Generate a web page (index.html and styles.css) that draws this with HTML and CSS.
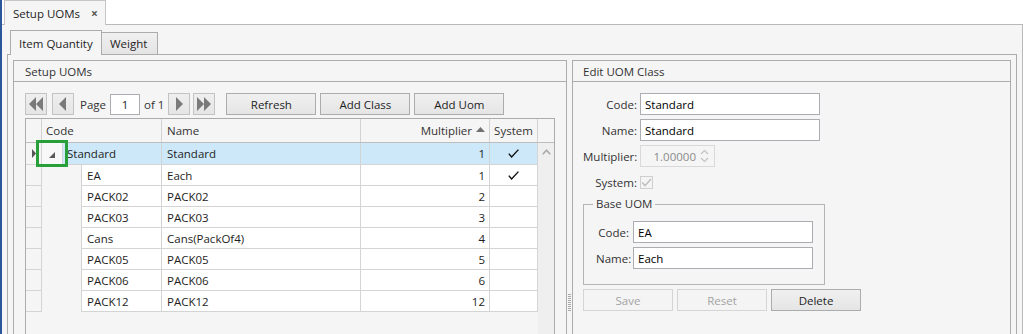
FILE: index.html
```html
<!DOCTYPE html>
<html>
<head>
<meta charset="utf-8">
<link rel="stylesheet" href="styles.css">
</head>
<body>
<div class="window">
  <div class="doc-tabs">
    <div class="doc-tab"><span>Setup UOMs</span><span class="close">×</span></div>
  </div>
  <div class="doc-body">
    <div class="tabs">
      <div class="tab active">Item Quantity</div>
      <div class="tab">Weight</div>
    </div>
    <div class="tab-panel">
      <section class="group left">
        <div class="group-head pl11">Setup UOMs</div>
        <div class="left-body">
          <div class="pager">
            <button class="pbtn"><svg width="16" height="14" viewBox="0 0 16 14"><path d="M8 0v14L1 7z M15 0v14L8 7z" fill="#7a7a7a"/></svg></button>
            <button class="pbtn m5"><svg width="10" height="14" viewBox="0 0 10 14"><path d="M8 0v14L1 7z" fill="#7a7a7a"/></svg></button>
            <span class="ptext m6">Page</span>
            <span class="pinput">1</span>
            <span class="ptext m4">of 1</span>
            <button class="pbtn m4"><svg width="10" height="14" viewBox="0 0 10 14"><path d="M2 0v14L9 7z" fill="#7a7a7a"/></svg></button>
            <button class="pbtn m3"><svg width="16" height="14" viewBox="0 0 16 14"><path d="M1 0v14L8 7z M8 0v14L15 7z" fill="#7a7a7a"/></svg></button>
            <button class="btn m11">Refresh</button>
            <button class="btn m4">Add Class</button>
            <button class="btn m4">Add Uom</button>
          </div>
          <div class="grid">
            <div class="ghead">
              <div class="hc c-ind"></div>
              <div class="hc c-code">Code</div>
              <div class="hc c-name">Name</div>
              <div class="hc c-mult">Multiplier <svg class="sort" width="9" height="5" viewBox="0 0 9 5"><path d="M0 5L4.5 0 9 5z" fill="#707070"/></svg></div>
              <div class="hc c-sys">System</div>
              <div class="hc c-scr"></div>
            </div>
            <div class="gbody">
              <div class="rows">
                <div class="row parent">
                  <div class="cell c-ind"><svg width="5" height="9" viewBox="0 0 5 9"><path d="M0 0L4 4.5 0 9z" fill="#555"/></svg></div>
                  <div class="cell c-exp"><svg width="6" height="6" viewBox="0 0 6 6"><path d="M6 0V6H0z" fill="#595959"/></svg></div>
                  <div class="cell c-pcode sel">Standard</div>
                  <div class="cell c-name sel">Standard</div>
                  <div class="cell c-mult sel">1</div>
                  <div class="cell c-sys sel"><svg width="11" height="9" viewBox="0 0 11 9"><path d="M0.8 4.6L3.6 8 10.4 0.6" fill="none" stroke="#111" stroke-width="1.4"/></svg></div>
                </div>
                <div class="row">
                  <div class="cell c-ind"></div><div class="indent"></div>
                  <div class="cell c-ccode">EA</div><div class="cell c-name">Each</div>
                  <div class="cell c-mult">1</div>
                  <div class="cell c-sys"><svg width="11" height="9" viewBox="0 0 11 9"><path d="M0.8 4.6L3.6 8 10.4 0.6" fill="none" stroke="#111" stroke-width="1.4"/></svg></div>
                </div>
                <div class="row">
                  <div class="cell c-ind"></div><div class="indent"></div>
                  <div class="cell c-ccode">PACK02</div><div class="cell c-name">PACK02</div>
                  <div class="cell c-mult">2</div><div class="cell c-sys"></div>
                </div>
                <div class="row">
                  <div class="cell c-ind"></div><div class="indent"></div>
                  <div class="cell c-ccode">PACK03</div><div class="cell c-name">PACK03</div>
                  <div class="cell c-mult">3</div><div class="cell c-sys"></div>
                </div>
                <div class="row">
                  <div class="cell c-ind"></div><div class="indent"></div>
                  <div class="cell c-ccode">Cans</div><div class="cell c-name">Cans(PackOf4)</div>
                  <div class="cell c-mult">4</div><div class="cell c-sys"></div>
                </div>
                <div class="row">
                  <div class="cell c-ind"></div><div class="indent"></div>
                  <div class="cell c-ccode">PACK05</div><div class="cell c-name">PACK05</div>
                  <div class="cell c-mult">5</div><div class="cell c-sys"></div>
                </div>
                <div class="row">
                  <div class="cell c-ind"></div><div class="indent"></div>
                  <div class="cell c-ccode">PACK06</div><div class="cell c-name">PACK06</div>
                  <div class="cell c-mult">6</div><div class="cell c-sys"></div>
                </div>
                <div class="row">
                  <div class="cell c-ind"></div><div class="indent"></div>
                  <div class="cell c-ccode">PACK12</div><div class="cell c-name">PACK12</div>
                  <div class="cell c-mult">12</div><div class="cell c-sys"></div>
                </div>
              </div>
              <div class="vscroll"><svg width="9" height="6" viewBox="0 0 9 6"><path d="M0.8 5.2L4.5 1.2 8.2 5.2" fill="none" stroke="#a8a8a8" stroke-width="1.6"/></svg></div>
            </div>
            <div class="focus-box"></div>
          </div>
        </div>
      </section>
      <div class="splitter"><span class="grip"></span></div>
      <section class="group right">
        <div class="group-head pl10">Edit UOM Class</div>
        <div class="right-body">
          <div class="frow"><span class="lbl">Code:</span><span class="inp">Standard</span></div>
          <div class="frow"><span class="lbl">Name:</span><span class="inp">Standard</span></div>
          <div class="frow"><span class="lbl">Multiplier:</span>
            <span class="spin"><span class="spin-val">1.00000</span>
              <svg width="9" height="14" viewBox="0 0 9 14"><path d="M1 5L4.5 1.5 8 5 M1 9L4.5 12.5 8 9" fill="none" stroke="#c2c2c2" stroke-width="1.2"/></svg>
            </span>
          </div>
          <div class="frow last"><span class="lbl">System:</span>
            <span class="chk"><svg width="11" height="9" viewBox="0 0 11 9"><path d="M1.2 4.6L4 7.6 10 1" fill="none" stroke="#bdbdbd" stroke-width="1.4"/></svg></span>
          </div>
          <div class="base">
            <span class="legend">Base UOM</span>
            <div class="frow"><span class="lbl2">Code:</span><span class="inp">EA</span></div>
            <div class="frow last"><span class="lbl2">Name:</span><span class="inp">Each</span></div>
          </div>
          <div class="actions">
            <button class="btn" disabled>Save</button>
            <button class="btn" disabled>Reset</button>
            <button class="btn">Delete</button>
          </div>
        </div>
      </section>
    </div>
  </div>
</div>
</body>
</html>
```
FILE: styles.css
```css
html, body { margin: 0; padding: 0; }
body {
  width: 1023px;
  height: 334px;
  overflow: hidden;
  background: #ffffff;
  font-family: "Open Sans", "Noto Sans", sans-serif;
  font-size: 11.5px;
  color: #1e1e1e;
}
button { font-family: inherit; font-size: inherit; }
.window {
  display: flex;
  flex-direction: column;
  height: 334px;
  border-left: 2px solid #2b579a;
  box-sizing: border-box;
  overflow: hidden;
}
.doc-tabs {
  height: 24px;
  display: flex;
  padding-left: 2px;
  position: relative;
  z-index: 1;
  flex: none;
}
.doc-tab {
  width: 102px;
  height: 25px;
  box-sizing: border-box;
  border: 1px solid #c6c6c6;
  border-bottom: none;
  background: #f5f5f5;
  display: flex;
  align-items: center;
  padding-left: 8px;
  color: #1e1e1e;
}
.doc-tab .close {
  margin-left: 11px;
  font-size: 12px;
  font-weight: bold;
  color: #555;
}
.doc-body {
  flex: 1;
  min-height: 0;
  border-top: 1px solid #b9b9b9;
  border-right: 1px solid #b9b9b9;
  background: #f5f5f5;
  padding: 5px 5px 0 5px;
  display: flex;
  flex-direction: column;
}
.tabs {
  display: flex;
  align-items: flex-end;
  height: 24px;
  margin-left: 3px;
  position: relative;
  z-index: 1;
  flex: none;
}
.tab {
  box-sizing: border-box;
  height: 22px;
  border: 1px solid #acacac;
  border-bottom: none;
  padding: 0 8px;
  display: flex;
  align-items: center;
  background: linear-gradient(#f0f0f0, #e4e4e4);
  margin-left: -1px;
  width: 57px;
}
.tab.active {
  margin-left: 0;
  width: 92px;
  height: 25px;
  margin-bottom: -1px;
  background: #f5f5f5;
  position: relative;
  z-index: 2;
}
.tab-panel {
  flex: 1;
  min-height: 0;
  border: 1px solid #acacac;
  border-bottom: none;
  padding: 5px 5px 0 5px;
  display: flex;
}
.group {
  box-sizing: border-box;
  border: 1px solid #acacac;
  border-bottom: none;
  display: flex;
  flex-direction: column;
  background: #f5f5f5;
}
.group.left { width: 554px; }
.group.right { width: 439px; }
.group-head {
  height: 21px;
  box-sizing: border-box;
  border-bottom: 1px solid #acacac;
  display: flex;
  align-items: center;
  color: #333;
  flex: none;
}
.pl11 { padding-left: 11px; }
.pl10 { padding-left: 10px; }
.splitter {
  width: 5px;
  display: flex;
  flex-direction: column;
  align-items: center;
}
.grip {
  margin-top: 234px;
  width: 3px;
  height: 17px;
  background: repeating-linear-gradient(#a8a8a8 0 1px, transparent 1px 2px);
}
.left-body {
  padding: 11px 11px 0 11px;
  flex: 1;
  display: flex;
  flex-direction: column;
  min-height: 0;
}
.pager {
  display: flex;
  align-items: center;
  height: 22px;
  margin-bottom: 3px;
  flex: none;
}
.pbtn {
  width: 22px;
  height: 22px;
  box-sizing: border-box;
  border: 1px solid #c3c3c3;
  background: linear-gradient(#efefef, #e5e5e5);
  padding: 0;
  display: flex;
  align-items: center;
  justify-content: center;
}
.m3 { margin-left: 3px; }
.m4 { margin-left: 4px; }
.m5 { margin-left: 5px; }
.m6 { margin-left: 6px; }
.m11 { margin-left: 11px; }
.ptext { color: #333; }
.pinput {
  margin-left: 4px;
  width: 30px;
  height: 21px;
  box-sizing: border-box;
  border: 1px solid #abadb3;
  background: #fff;
  display: flex;
  align-items: center;
  justify-content: center;
}
.btn {
  width: 90px;
  height: 22px;
  box-sizing: border-box;
  border: 1px solid #acacac;
  background: linear-gradient(#f0f0f0, #e5e5e5);
  color: #1e1e1e;
  padding: 0;
}
.btn:disabled {
  border-color: #d5d5d5;
  background: #f4f4f4;
  color: #a3a3a3;
}
.grid {
  position: relative;
  width: 530px;
  box-sizing: border-box;
  border: 1px solid #ababab;
  border-bottom: none;
  flex: 1;
  display: flex;
  flex-direction: column;
  background: #f5f5f5;
}
.ghead {
  display: flex;
  height: 24px;
  box-sizing: border-box;
  border-bottom: 1px solid #bdbdbd;
  flex: none;
}
.hc {
  box-sizing: border-box;
  border-right: 1px solid #d2d2d2;
  display: flex;
  align-items: center;
  color: #333;
}
.c-ind { width: 16px; }
.c-code { width: 120px; padding-left: 4px; }
.c-name { width: 199px; padding-left: 5px; }
.c-mult { width: 129px; justify-content: flex-end; padding-right: 4px; }
.c-sys { width: 48px; justify-content: center; }
.c-scr { width: 16px; border-right: none; }
.sort { margin-left: 4px; margin-bottom: 2px; }
.gbody {
  flex: 1;
  display: flex;
}
.rows { width: 512px; }
.row {
  display: flex;
  height: 21px;
}
.row.parent { height: 22px; }
.cell {
  box-sizing: border-box;
  border-right: 1px solid #d4d4d4;
  border-bottom: 1px solid #d4d4d4;
  background: #fff;
  display: flex;
  align-items: center;
  color: #1e1e1e;
}
.cell.c-ind { background: #f5f5f5; justify-content: center; padding-left: 1px; }
.c-exp { width: 21px; background: #f8f8f8; justify-content: center; padding-top: 3px; }
.c-pcode { width: 99px; padding-left: 4px; }
.c-ccode { width: 81px; padding-left: 5px; border-left: 1px solid #d4d4d4; }
.indent { width: 39px; }
.sel { background: #cce8f9; }
.vscroll {
  width: 16px;
  background: #efefef;
  display: flex;
  justify-content: center;
  align-items: flex-start;
  padding-top: 6px;
  box-sizing: border-box;
}
.focus-box {
  position: absolute;
  left: 10px;
  top: 21px;
  width: 32px;
  height: 27px;
  box-sizing: border-box;
  border: 3px solid #27a03a;
}
.right-body {
  padding: 11px 10px 0 10px;
}
.frow {
  display: flex;
  align-items: center;
  height: 22px;
  margin-bottom: 4px;
}
.frow.last { margin-bottom: 0; }
.lbl {
  width: 54px;
  margin-right: 3px;
  text-align: right;
  color: #333;
}
.lbl2 {
  width: 33px;
  margin-right: 4px;
  text-align: right;
  color: #333;
}
.inp {
  width: 180px;
  height: 22px;
  box-sizing: border-box;
  border: 1px solid #abadb3;
  background: #fff;
  padding-left: 4px;
  display: flex;
  align-items: center;
  color: #000;
}
.spin {
  width: 75px;
  height: 22px;
  box-sizing: border-box;
  border: 1px solid #d9d9d9;
  display: flex;
  align-items: center;
  justify-content: flex-end;
  padding-right: 5px;
  color: #8a8a8a;
}
.spin-val { margin-right: 4px; }
.chk {
  width: 13px;
  height: 13px;
  box-sizing: border-box;
  border: 1px solid #cfcfcf;
  background: #f4f4f4;
  display: flex;
  align-items: center;
  justify-content: center;
}
.base {
  position: relative;
  margin-top: 11px;
  width: 242px;
  box-sizing: border-box;
  border: 1px solid #b4b4b4;
  padding: 16px 11px 15px 12px;
}
.legend {
  position: absolute;
  top: -9px;
  left: 9px;
  padding: 0 3px;
  background: #f5f5f5;
  color: #333;
}
.actions {
  display: flex;
  gap: 4px;
  margin-top: 4px;
}
```
